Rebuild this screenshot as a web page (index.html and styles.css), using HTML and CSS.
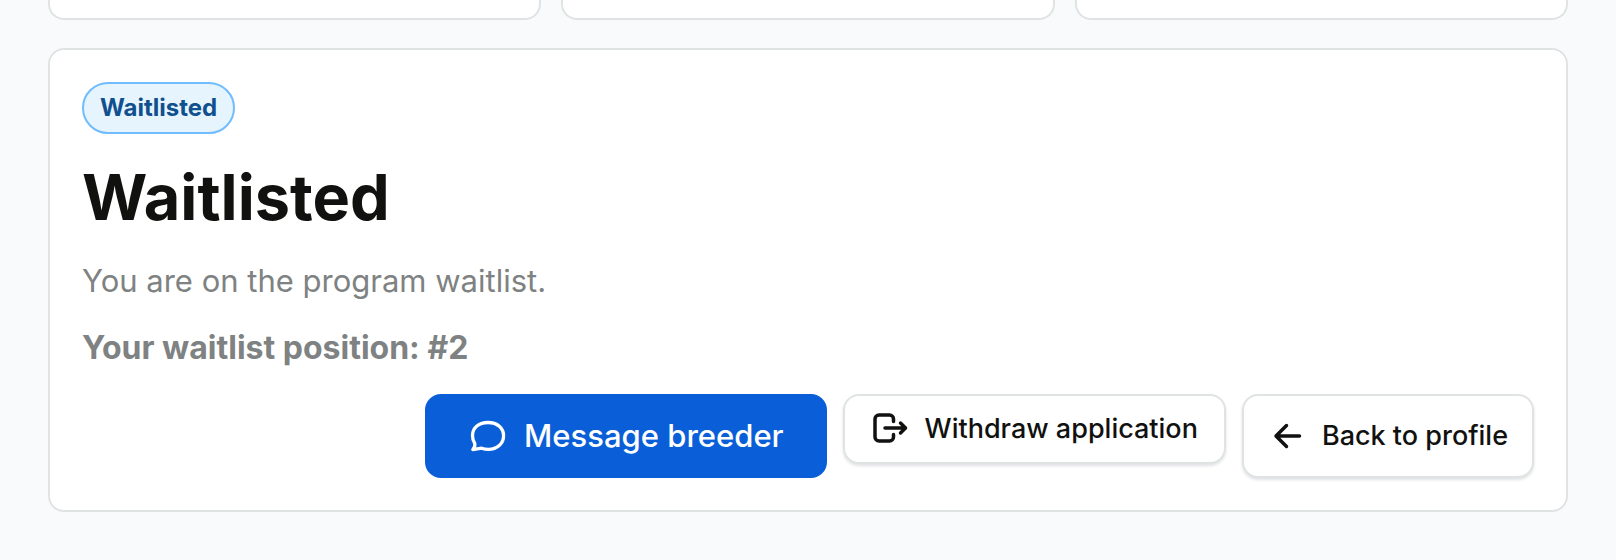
FILE: index.html
```
<!DOCTYPE html>
<html lang="en">

<head>
    <meta charset="UTF-8">
    <meta name="viewport" content="width=device-width, initial-scale=1.0" />
    <title>Application status</title>
    <link rel="stylesheet" href="styles.css">
</head>

<body>
    <main class="page">
        <!-- Summary cards -->
        <div class="summary">
            <div class="card"></div>
            <div class="card"></div>
            <div class="card"></div>
        </div>

        <!-- Application status -->
        <section class="card status">
            <span class="badge">Waitlisted</span>
            <h1 class="title">Waitlisted</h1>
            <p class="text">You are on the program waitlist.</p>
            <p class="text position">Your waitlist position: #2</p>

            <div class="actions">
                <button type="button" class="btn btn-primary">
                    <svg class="icon" viewBox="0 0 40 40" stroke-width="3.3" aria-hidden="true">
                        <path d="M4.8 33.6 C6.6 31.6 7.2 29.4 6.7 27.3 C5.2 25 4.5 22.4 4.5 19.4 C4.5 11.4 11 6.5 20 6.5 C29.4 6.5 35.6 12.2 35.6 19.8 C35.6 27.8 29 33.4 20.5 33.4 C17.8 33.4 15.6 32.9 13.6 32.2 Z" />
                    </svg>
                    Message breeder
                </button>
                <form class="withdraw">
                    <button type="button" class="btn">
                        <svg class="icon" viewBox="0 0 40 40" stroke-width="3.5" aria-hidden="true">
                            <path d="M22.500 12.500 V10 A4 4 0 0 0 18.500 6 H8 A4 4 0 0 0 4 10 V28 A4 4 0 0 0 8 32 H18.500 A4 4 0 0 0 22.500 28 V25.500" />
                            <path d="M14 19 H34.500 M29.500 14 L34.500 19 L29.500 24" />
                        </svg>
                        Withdraw application
                    </button>
                </form>
                <button type="button" class="btn">
                    <svg class="icon" viewBox="0 0 40 40" stroke-width="3.5" aria-hidden="true">
                        <path d="M31.500 20 H8 M18.500 9.500 L8 20 L18.500 30.500" />
                    </svg>
                    Back to profile
                </button>
            </div>
        </section>
    </main>
</body>

</html>
```
FILE: styles.css
```
* {
    box-sizing: border-box;
}

body {
    margin: 0;
    background: #f9fafc;
    color: #111110;
    font-family: "Inter", "Liberation Sans", sans-serif;
}

.page {
    padding: 0 48px 48px;
}

.card {
    background: #ffffff;
    border: 2px solid #e0e3e3;
    border-radius: 16px;
}

.summary {
    display: grid;
    grid-template-columns: repeat(3, 1fr);
    gap: 20px;
    margin-bottom: 28px;
}

.summary .card {
    height: 20px;
    border-top: 0;
    border-top-left-radius: 0;
    border-top-right-radius: 0;
}

.status {
    display: flex;
    flex-direction: column;
    align-items: flex-start;
    padding: 32px;
}

.badge {
    padding: 8px 16px;
    background: #e6f4fe;
    border: 2px solid #70bcfc;
    border-radius: 26px;
    color: #11508f;
    font-size: 24px;
    font-weight: 700;
    line-height: 32px;
}

.title {
    margin: 24px 0 0;
    font-size: 63px;
    font-weight: 700;
    line-height: 78px;
}

.text {
    margin: 22px 0 0;
    color: #7e8282;
    font-size: 31px;
    line-height: 45px;
}

.position {
    font-size: 32px;
    font-weight: 700;
}

.actions {
    display: flex;
    flex-wrap: wrap;
    justify-content: flex-end;
    align-self: stretch;
    gap: 16px;
    margin-top: 24px;
}

.withdraw {
    margin: 0;
}

.btn {
    display: flex;
    align-items: center;
    gap: 14px;
    padding: 13px 24px;
    background: #ffffff;
    border: 2px solid #dfe4e3;
    border-radius: 16px;
    box-shadow: 0 2px 3px rgba(0, 20, 40, 0.12);
    color: #111110;
    font-family: inherit;
    font-size: 27px;
    font-weight: 500;
    line-height: 40px;
    cursor: pointer;
}

.withdraw .btn {
    padding: 13px 26px;
}

.btn-primary {
    gap: 16px;
    padding: 20px 41px;
    background: #0a5fd8;
    border-color: #0a5fd8;
    box-shadow: none;
    color: #ffffff;
    font-size: 31px;
}

.icon {
    width: 40px;
    height: 40px;
    fill: none;
    stroke: currentColor;
    stroke-linecap: round;
    stroke-linejoin: round;
}
```
